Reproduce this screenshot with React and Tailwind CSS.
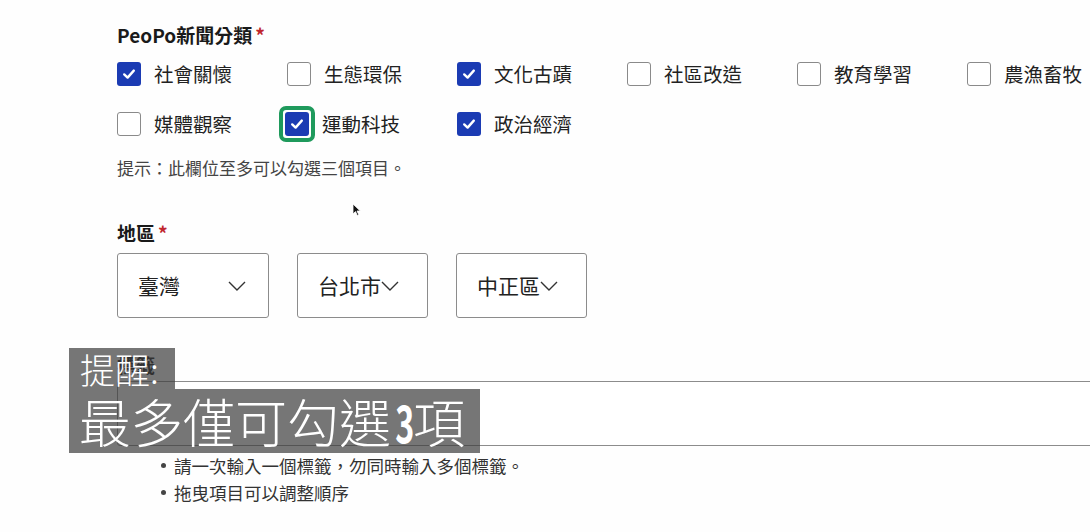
import React from "react";

const font = { fontFamily: '"Noto Sans CJK TC", "Noto Sans", sans-serif' };

const items = [
  ["社會關懷", true],
  ["生態環保", false],
  ["文化古蹟", true],
  ["社區改造", false],
  ["教育學習", false],
  ["農漁畜牧", false],
  ["媒體觀察", false],
  ["運動科技", true, true],
  ["政治經濟", true],
];

function Check({ checked, focused }) {
  const box = checked ? (
    <span className="flex h-[24px] w-[24px] items-center justify-center rounded-[3px] bg-[#1b3bb3]">
      <svg width="16" height="16" viewBox="0 0 16 16">
        <polyline points="3.2,8.4 6.6,11.6 12.8,4.6" fill="none" stroke="white" strokeWidth="2.4" strokeLinecap="round" strokeLinejoin="round" />
      </svg>
    </span>
  ) : (
    <span className="block h-[24px] w-[24px] rounded-[3px] border border-[#8a8a8a] bg-white" />
  );
  if (focused) {
    return (
      <span className="flex rounded-[7px] border-[4px] border-[#1f9a5c] p-[2px]">{box}</span>
    );
  }
  return box;
}

function Chevron() {
  return (
    <svg width="18" height="10" viewBox="0 0 18 10" className="shrink-0">
      <polyline points="1,1 9,9 17,1" fill="none" stroke="#333" strokeWidth="1.4" />
    </svg>
  );
}

function Select({ label, w, spread }) {
  return (
    <div
      className={`flex h-[65px] items-center rounded-[3px] border border-[#8c8c8c] bg-white pl-[20px] pr-[22px] text-[21px] text-[#222] ${spread ? "justify-between" : ""}`}
      style={{ width: w }}
    >
      <span>{label}</span>
      <Chevron />
    </div>
  );
}

export default function App() {
  return (
    <div className="relative h-[532px] w-[1090px] overflow-hidden bg-[#fefefe] text-[#222]" style={font}>
      <div className="pl-[117px] pt-[21px]">
        <div className="flex h-[28px] items-center text-[19px] font-bold text-[#1a1a1a]">
          PeoPo新聞分類<span className="ml-[3px] text-[#c0262d]">*</span>
        </div>
        <div className="grid grid-cols-[repeat(6,170px)] auto-rows-[50px]">
          {items.map(([t, c, f]) => (
            <div key={t} className="relative flex items-center">
              <span className={f ? "-ml-[8px] mr-[7px]" : "mr-[13px]"}>
                <Check checked={c} focused={f} />
              </span>
              <span className="whitespace-nowrap text-[19.5px] leading-none">{t}</span>
            </div>
          ))}
        </div>
        <div className="mt-[7px] h-[24px] text-[17px] leading-[24px] text-[#444]">
          提示：此欄位至多可以勾選三個項目。
        </div>
        <div className="mt-[39px] flex h-[28px] items-center text-[19px] font-bold text-[#1a1a1a]">
          地區<span className="ml-[3px] text-[#c0262d]">*</span>
        </div>
        <div className="mt-[6px] flex gap-[28px]">
          <Select label="臺灣" w={152} spread />
          <Select label="台北市" w={131} />
          <Select label="中正區" w={131} />
        </div>
        <div className="mt-[33px] flex h-[28px] items-center text-[19px] font-bold text-[#1a1a1a]">
          標籤
        </div>
        <div className="mt-[2px] h-[65px] w-[1000px] rounded-[3px] border border-[#8c8c8c] bg-white" />
        <ul className="mt-[6px] pl-[44px] text-[17.5px] leading-[27px] text-[#333]">
          <li className="flex items-center">
            <span className="mr-[8px] h-[5px] w-[5px] rounded-full bg-[#444]" />
            請一次輸入一個標籤，勿同時輸入多個標籤。
          </li>
          <li className="flex items-center">
            <span className="mr-[8px] h-[5px] w-[5px] rounded-full bg-[#444]" />
            拖曳項目可以調整順序
          </li>
        </ul>
      </div>

      {/* caption overlay */}
      <div className="absolute left-[69px] top-[348px] flex flex-col items-start">
        <div className="flex h-[41px] w-[106px] items-center overflow-visible whitespace-nowrap bg-[rgba(60,60,60,0.7)] pl-[11px] text-[35px] font-light leading-none text-white">
          提醒:
        </div>
        <div className="flex h-[64px] w-[411px] items-center whitespace-nowrap bg-[rgba(60,60,60,0.7)] pl-[10px] text-[52px] font-light leading-none text-white">
          最多僅可勾選<span className="inline-block w-[22px] scale-x-[0.62] text-center font-bold">3</span>項
        </div>
      </div>

      {/* mouse cursor */}
      <svg className="absolute left-[352px] top-[203px]" width="9" height="14" viewBox="0 0 9 14">
        <path d="M1 1 L1 11 L3.5 8.6 L5.3 12.5 L6.8 11.8 L5 8 L8.3 8 Z" fill="#111" stroke="#fff" strokeWidth="0.8" />
      </svg>
    </div>
  );
}
